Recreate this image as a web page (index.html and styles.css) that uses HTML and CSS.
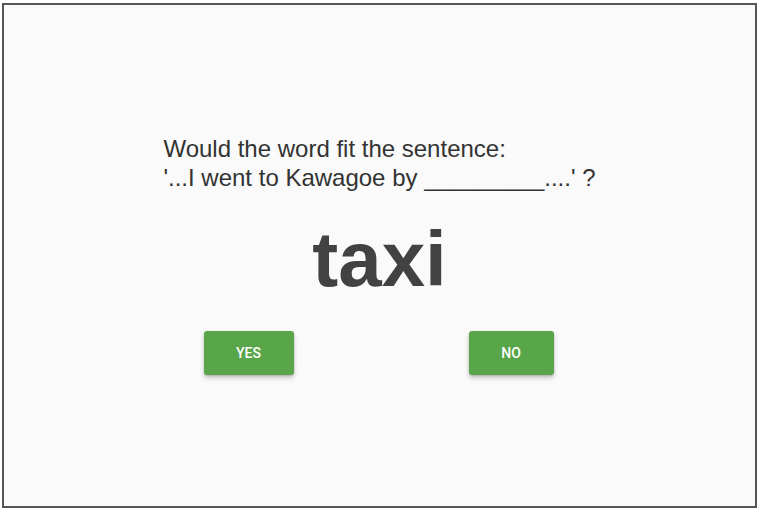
FILE: index.html
```html
<!DOCTYPE html>
<html>
<head>
<meta charset="utf-8">
<link rel="stylesheet" href="styles.css">
</head>
<body>
<div class="frame">
  <div class="question">
    <div class="prompt">Would the word fit the sentence:<br>'...I went to Kawagoe by _________....' ?</div>
  </div>
  <div class="word">taxi</div>
  <div class="buttons">
    <button class="btn btn-yes">YES</button>
    <button class="btn btn-no">NO</button>
  </div>
</div>
</body>
</html>
```
FILE: styles.css
```css
html, body {
  margin: 0;
  padding: 0;
  background: #ffffff;
}
body {
  padding: 3px 0 0 2px;
  font-family: "Liberation Sans", Arial, sans-serif;
}
.frame {
  box-sizing: border-box;
  width: 755px;
  height: 505px;
  border: 2px solid #555555;
  background: #fafafa;
  display: flex;
  flex-direction: column;
  align-items: center;
  padding-top: 129px;
}
.question {
  display: flex;
  justify-content: center;
  width: 100%;
}
.prompt {
  font-size: 24px;
  line-height: 29px;
  color: #333333;
  text-align: left;
}
.word {
  margin-top: 21px;
  font-size: 78px;
  font-weight: bold;
  line-height: 92px;
  color: #424242;
}
.buttons {
  margin-top: 26px;
  margin-right: 2px;
  display: flex;
  gap: 175px;
}
.btn {
  height: 44px;
  border: none;
  border-radius: 3px;
  background: #58a54a;
  color: #ffffff;
  font-family: Roboto, "Liberation Sans", sans-serif;
  font-weight: 500;
  font-size: 14px;
  box-shadow: 0 3px 5px rgba(0,0,0,0.2), 0 1px 2px rgba(0,0,0,0.15);
}
.btn-yes { width: 90px; }
.btn-no { width: 85px; }
```
